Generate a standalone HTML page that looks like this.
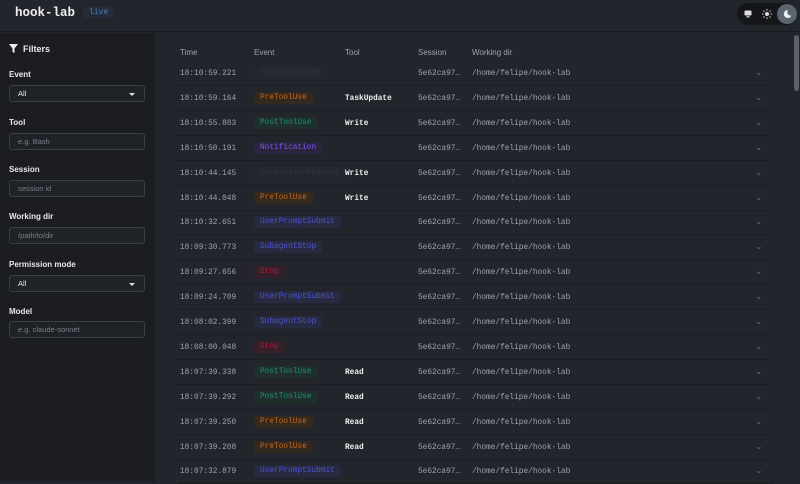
<!DOCTYPE html>
<html><head><style>
*{margin:0;padding:0;box-sizing:border-box}
html,body{height:482px}
body{width:800px;background:#22252b;font-family:"Liberation Sans",sans-serif;overflow:hidden;position:relative;color:#e6e6e6}
.hdr{position:absolute;left:0;top:0;width:800px;height:32px;background:#22252b;border-bottom:1px solid #15171b}
.title{position:absolute;left:15px;top:6px;font:bold 12.5px "Liberation Mono",monospace;color:#f0f0f0}
.live{position:absolute;left:83px;top:7px;padding:1px 6px;border-radius:4px;background:#262d3a;color:#4a7ab8;font:8px "Liberation Mono",monospace}
.tog{position:absolute;left:737px;top:3px;width:60px;height:22px;border-radius:11px;background:#14161a}
.side{position:absolute;left:0;top:33px;width:155px;height:449px;background:#1b1d22}
.lab{position:absolute;left:9px;font-weight:bold;font-size:8px;color:#e8e8e8}
.inp{position:absolute;left:9px;width:136px;height:17px;border:1px solid #3a3e46;border-radius:3px;background:#1f2227;font-size:7.5px;color:#7a7f88;padding:3px 8px}
.sel{color:#e8e8e8}
.sel:after{content:"";position:absolute;right:9px;top:7px;border-left:3px solid transparent;border-right:3px solid transparent;border-top:3px solid #ddd}
.th{position:absolute;top:48px;font-size:8px;color:#9ea3ab}
.row{position:absolute;left:177px;width:596px;height:25px;font:7.8px "Liberation Mono",monospace;color:#9ea3ab}
.row.b{border-bottom:1px solid #1b1d22}
.row span{position:absolute;top:9px}
.t{left:3px}.tool{left:168px;color:#eee;font-weight:bold}.s{left:241px}.w{left:295px}
.ev{left:77px;top:6px!important;padding:2px 6px;border-radius:3px}
.ch{left:578px;top:7px!important;color:#6a6f78;font-size:9px}
.o{color:#c8661c;background:#33291f}.g{color:#1f8f74;background:#1f302c}.p{color:#7d52e6;background:#2a2640}.i{color:#4f52d4;background:#272a40}.r{color:#b3163c;background:#35202a}.d{color:#2e3442;background:#23272e}
</style></head><body>
<div class="hdr"><div class="title">hook-lab</div><div class="live">live</div>
<div class="tog">
<svg style="position:absolute;left:7px;top:7px" width="8" height="8" viewBox="0 0 8 8"><rect x="0.5" y="0.5" width="7" height="5" rx="1" fill="#ddd"/><rect x="2.5" y="6.2" width="3" height="1.3" fill="#ddd"/></svg>
<svg style="position:absolute;left:25px;top:6px" width="10" height="10" viewBox="0 0 10 10"><circle cx="5" cy="5" r="2" fill="#ddd"/><g stroke="#ddd" stroke-width="1"><path d="M5 0v1.5M5 8.5V10M0 5h1.5M8.5 5H10M1.5 1.5l1 1M7.5 7.5l1 1M1.5 8.5l1-1M7.5 2.5l1-1"/></g></svg>
<div style="position:absolute;left:40px;top:1px;width:20px;height:20px;border-radius:10px;background:#5c6470"></div>
<svg style="position:absolute;left:45px;top:6px" width="10" height="10" viewBox="0 0 10 10"><path d="M6 1a4 4 0 1 0 3.5 5.5A3.5 3.5 0 0 1 6 1z" fill="#eee"/></svg>
</div></div>
<div class="side">
<svg style="position:absolute;left:9px;top:11px" width="9" height="9" viewBox="0 0 9 9"><path d="M0 0h9L5.5 4.5V9L3.5 8V4.5z" fill="#eee"/></svg>
<div class="lab" style="top:11px;left:23px;font-size:9px">Filters</div>
<div class="lab" style="top:37px">Event</div><div class="inp sel" style="top:52px">All</div>
<div class="lab" style="top:85px">Tool</div><div class="inp" style="top:100px">e.g. Bash</div>
<div class="lab" style="top:132px">Session</div><div class="inp" style="top:147px">session id</div>
<div class="lab" style="top:179px">Working dir</div><div class="inp" style="top:194px">/path/to/dir</div>
<div class="lab" style="top:227px">Permission mode</div><div class="inp sel" style="top:242px">All</div>
<div class="lab" style="top:274px">Model</div><div class="inp" style="top:288px">e.g. claude-sonnet</div>
</div>
<div style="position:absolute;left:794px;top:35px;width:5px;height:56px;border-radius:3px;background:#5a5f68"></div>
<div class="th" style="left:180px">Time</div><div class="th" style="left:254px">Event</div><div class="th" style="left:345px">Tool</div><div class="th" style="left:418px">Session</div><div class="th" style="left:472px">Working dir</div>
<div id="rows"></div>
<script>
var d=[["18:10:59.221","TaskCompleted","d",""],["18:10:59.164","PreToolUse","o","TaskUpdate"],["18:10:55.883","PostToolUse","g","Write"],["18:10:50.191","Notification","p",""],["18:10:44.145","PermissionRequest","d","Write"],["18:10:44.048","PreToolUse","o","Write"],["18:10:32.651","UserPromptSubmit","i",""],["18:09:30.773","SubagentStop","i",""],["18:09:27.656","Stop","r",""],["18:09:24.709","UserPromptSubmit","i",""],["18:08:02.399","SubagentStop","i",""],["18:08:00.048","Stop","r",""],["18:07:39.338","PostToolUse","g","Read"],["18:07:39.292","PostToolUse","g","Read"],["18:07:39.250","PreToolUse","o","Read"],["18:07:39.208","PreToolUse","o","Read"],["18:07:32.879","UserPromptSubmit","i",""]];
var h="";d.forEach(function(r,k){h+='<div class="row b" style="top:'+(61+24.9*k)+'px"><span class="t">'+r[0]+'</span><span class="ev '+r[2]+'">'+r[1]+'</span><span class="tool">'+r[3]+'</span><span class="s">5e62ca97…</span><span class="w">/home/felipe/hook-lab</span><span class="ch">⌄</span></div>';});
document.getElementById("rows").innerHTML=h;
</script>
</body></html>
